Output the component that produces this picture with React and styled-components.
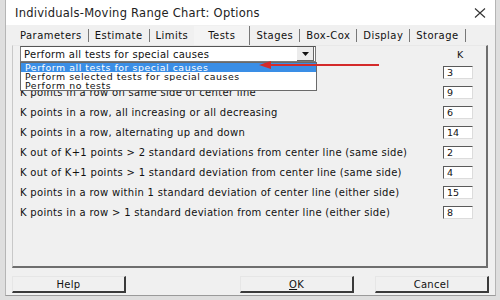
import React from 'react'
import styled, { createGlobalStyle } from 'styled-components'

const GlobalStyle = createGlobalStyle`
  html, body {
    margin: 0;
    padding: 0;
    background: #dedede;
    font-family: "DejaVu Sans", Verdana, sans-serif;
    color: #111;
  }
`

const tabs = ['Parameters', 'Estimate', 'Limits', 'Tests', 'Stages', 'Box-Cox', 'Display', 'Storage']

// first label sits under the open drop-down list, so it isn't visible
const tests = [
  { label: '', k: '3' },
  { label: 'K points in a row on same side of center line', k: '9' },
  { label: 'K points in a row, all increasing or all decreasing', k: '6' },
  { label: 'K points in a row, alternating up and down', k: '14' },
  { label: 'K out of K+1 points > 2 standard deviations from center line (same side)', k: '2' },
  { label: 'K out of K+1 points > 1 standard deviation from center line (same side)', k: '4' },
  { label: 'K points in a row within 1 standard deviation of center line (either side)', k: '15' },
  { label: 'K points in a row > 1 standard deviation from center line (either side)', k: '8' },
]

const options = [
  'Perform all tests for special causes',
  'Perform selected tests for special causes',
  'Perform no tests',
]

const Page = styled.div`
  width: 500px;
  height: 300px;
  padding-left: 5px;
  box-sizing: border-box;
  overflow: hidden;
`

const Window = styled.div`
  width: 491px;
  height: 296px;
  background: #f0f0f0;
  border-left: 1px solid #b5b5b5;
  border-right: 1px solid #b5b5b5;
  border-bottom: 1px solid #9a9a9a;
  box-sizing: border-box;
  display: flex;
  flex-direction: column;
`

const TitleBar = styled.div`
  height: 25px;
  background: #fff;
  display: flex;
  align-items: center;
  justify-content: space-between;
  padding: 0 9px 0 9px;
  flex-shrink: 0;
`

const Title = styled.span`
  font-size: 11.5px;
  letter-spacing: 0.25px;
  color: #222;
`

const TabStrip = styled.div`
  display: flex;
  align-items: center;
  height: 20px;
  padding-left: 8px;
`

const Tab = styled.div`
  font-size: 10px;
  letter-spacing: 0.45px;
  height: ${p => (p.$active ? '19px' : '13px')};
  display: flex;
  align-items: center;
  border-right: ${p => (p.$noSep ? 'none' : '1px solid #777')};
  background: ${p => (p.$active ? '#f4f4f4' : 'transparent')};
  padding: ${p => (p.$active ? '0 14px 0 14px' : '0 6px')};
  align-self: ${p => (p.$active ? 'flex-end' : 'center')};
`

const Panel = styled.div`
  position: relative;
  margin-left: 6px;
  width: 476px;
  height: 223px;
  box-sizing: border-box;
  border-left: 1px solid #c8c8c8;
  border-top: 1px solid #e8e8e8;
  border-right: 2px solid #6e6e6e;
  border-bottom: 2px solid #6e6e6e;
  padding: 0 13px 0 7px;
`

const Grid = styled.div`
  display: grid;
  grid-template-columns: 1fr 30px;
  grid-auto-rows: 20px;
  grid-template-rows: 16px;
  align-items: center;
`

const Combo = styled.div`
  width: 296px;
  height: 16px;
  box-sizing: border-box;
  background: #fff;
  border: 1px solid #7a7a7a;
  border-top-color: #555;
  display: flex;
  align-items: center;
  justify-content: space-between;
  padding-left: 3px;
  font-size: 10px;
  letter-spacing: 0.3px;
`

const ComboButton = styled.div`
  width: 16px;
  height: 13px;
  margin-right: 1px;
  background: #ececec;
  border-right: 1px solid #666;
  border-bottom: 1px solid #666;
  display: flex;
  align-items: center;
  justify-content: center;
`

const KHead = styled.div`
  font-size: 9.5px;
  text-align: center;
  padding-left: 4px;
`

const Label = styled.div`
  font-size: 10px;
  letter-spacing: 0.3px;
  white-space: nowrap;
`

const KBox = styled.div`
  height: 13px;
  box-sizing: border-box;
  background: #fff;
  border-top: 1px solid #5a5a5a;
  border-left: 1px solid #5a5a5a;
  border-right: 1px solid #dcdcdc;
  border-bottom: 1px solid #dcdcdc;
  font-size: 9.5px;
  line-height: 11px;
  padding-left: 3px;
`

const DropList = styled.div`
  position: absolute;
  left: 7px;
  top: 16px;
  width: 297px;
  height: 29px;
  box-sizing: border-box;
  background: #fff;
  border: 1px solid #6a6a6a;
`

const Option = styled.div`
  height: 9px;
  line-height: 9px;
  font-size: 9.4px;
  letter-spacing: 0.55px;
  padding-left: 4px;
  white-space: nowrap;
  overflow: hidden;
  background: ${p => (p.$selected ? '#3a8ee6' : 'transparent')};
  color: ${p => (p.$selected ? '#fff' : '#111')};
`

const Arrow = styled.svg`
  position: absolute;
  left: 240px;
  top: 14px;
`

const Footer = styled.div`
  display: flex;
  align-items: center;
  padding: 8px 0 0 6px;
`

const Button = styled.div`
  width: ${p => p.$w || 114}px;
  height: 17px;
  box-sizing: border-box;
  margin-left: ${p => p.$gap || 0}px;
  background: #f0f0f0;
  border-top: 1px solid #e6e6e6;
  border-left: 1px solid #e6e6e6;
  border-right: 2px solid #3a3a3a;
  border-bottom: 2px solid #3a3a3a;
  display: flex;
  align-items: center;
  justify-content: center;
  font-size: 10px;
  letter-spacing: 0.3px;
  u {
    text-decoration: underline;
  }
`

const App = () => {
  return (
    <Page>
      <GlobalStyle />
      <Window>
        <TitleBar>
          <Title>Individuals-Moving Range Chart: Options</Title>
          <svg width="12" height="10" viewBox="0 0 12 10">
            <path d="M1 0.5 L11 9.5 M11 0.5 L1 9.5" stroke="#333" strokeWidth="1.1" fill="none" />
          </svg>
        </TitleBar>
        <TabStrip>
          {tabs.map(t => (
            <Tab key={t} $active={t === 'Tests'} $noSep={t === 'Limits'}>
              {t}
            </Tab>
          ))}
        </TabStrip>
        <Panel>
          <Grid>
            <Combo>
              {options[0]}
              <ComboButton>
                <svg width="7" height="4" viewBox="0 0 7 4">
                  <path d="M0 0 H7 L3.5 4 Z" fill="#111" />
                </svg>
              </ComboButton>
            </Combo>
            <KHead>K</KHead>
            {tests.map(t => (
              <React.Fragment key={t.k}>
                <Label>{t.label}</Label>
                <KBox>{t.k}</KBox>
              </React.Fragment>
            ))}
          </Grid>
          <DropList>
            {options.map((o, i) => (
              <Option key={o} $selected={i === 0}>
                {o}
              </Option>
            ))}
          </DropList>
          <Arrow width="130" height="10" viewBox="0 0 130 10">
            <path d="M126 5 H14" stroke="#d42a2a" strokeWidth="2" />
            <path d="M6 5 L18 1 L18 9 Z" fill="#d42a2a" />
          </Arrow>
        </Panel>
        <Footer>
          <Button>Help</Button>
          <Button $gap={114}><u>O</u>K</Button>
          <Button $gap={21}>Cancel</Button>
        </Footer>
      </Window>
    </Page>
  )
}

export default App
